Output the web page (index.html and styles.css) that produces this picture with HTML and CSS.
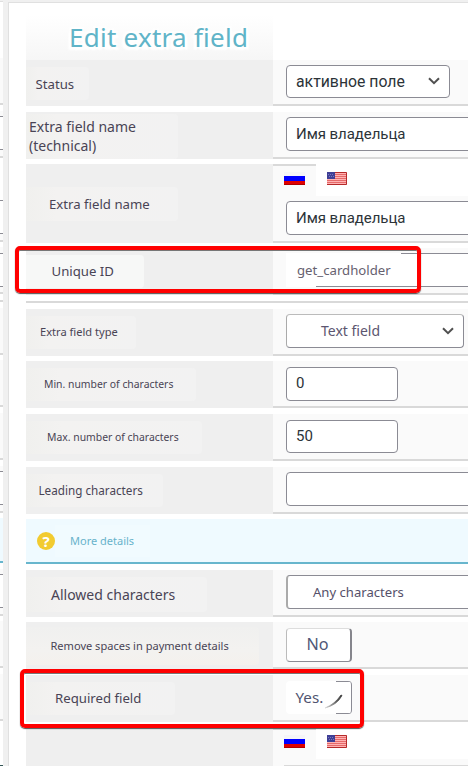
FILE: index.html
```html
<!DOCTYPE html>
<html lang="en">
<head>
<meta charset="utf-8">
<title>Edit extra field</title>
<link rel="stylesheet" href="styles.css">
</head>
<body>
<svg width="0" height="0" class="defs" aria-hidden="true">
  <defs>
    <linearGradient id="pen"><stop offset="0" stop-color="#ddd"/><stop offset=".6" stop-color="#666"/><stop offset="1" stop-color="#333"/></linearGradient>
    <symbol id="ru" viewBox="0 0 21 13"><path fill="#f5f5f7" d="M0 0h21v4H0z"/><path fill="#00f" d="M0 4h21v5H0z"/><path fill="#e00000" d="M0 9h21v4H0z"/><path fill="#b00000" d="M0 12h21v1H0z"/></symbol>
    <symbol id="us" viewBox="0 0 20 13"><path fill="#ffb3b3" d="M0 0h20v13H0z"/><path stroke="#e56a6a" d="M0 2.5h20M0 4.5h20M0 6.5h20M0 8.5h20M0 10.5h20"/><path fill="none" stroke="#b52a2a" d="M0 .5h19.5v12H0"/><path fill="#3f3f96" d="M0 0h8v7H0z"/><path stroke="#7777bd" stroke-dasharray="1 1" d="M1 2.5h6M2 4.5h5"/></symbol>
    <symbol id="chev" viewBox="0 0 12 8"><path d="M1 1.2l5 5 5-5" fill="none" stroke="#505050" stroke-width="2"/></symbol>
  </defs>
</svg>
<div class="page">
  <div class="strip"></div>
  <main class="panel">
    <header class="head"><h1>Edit extra field</h1></header>
    <section class="row status"><div class="label"><span>Status</span></div><div class="value"><div class="input select w164">активное поле<svg class="chev"><use href="#chev"/></svg></div></div></section>
    <section class="row tech"><div class="label"><span>Extra field name<br>(technical)</span></div><div class="value"><div class="input wide">Имя владельца</div></div></section>
    <section class="row names"><div class="label"><span>Extra field name</span></div><div class="value"><div class="tabs"><div class="tab"><svg class="ru"><use href="#ru"/></svg></div><div class="tabs-rest"><svg class="us"><use href="#us"/></svg></div></div><div class="input wide">Имя владельца</div></div></section>
    <section class="row unique"><div class="label"><span>Unique ID</span></div><div class="value"><div class="input wide"><b>get_cardholder</b></div></div><div class="mark mark-id"></div></section>
    <div class="rule"></div>
    <section class="row type"><div class="label"><span>Extra field type</span></div><div class="value"><div class="input select w178">Text field<svg class="chev"><use href="#chev"/></svg></div></div></section>
    <section class="row min"><div class="label"><span>Min. number of characters</span></div><div class="value"><div class="input w112">0</div></div></section>
    <section class="row max"><div class="label"><span>Max. number of characters</span></div><div class="value"><div class="input w112">50</div></div></section>
    <section class="row leading"><div class="label"><span>Leading characters</span></div><div class="value"><div class="input wide"></div></div></section>
    <section class="more"><i>?</i><span>More details</span></section>
    <section class="row allowed"><div class="label"><span>Allowed characters</span></div><div class="value"><div class="input wide">Any characters</div></div></section>
    <section class="row remove"><div class="label"><span>Remove spaces in payment details</span></div><div class="value"><div class="input w66">No</div></div></section>
    <section class="row required"><div class="label"><span>Required field</span></div><div class="value"><div class="input w66"><b>Yes.</b><svg class="pen" viewBox="0 0 18 15"><path d="M0 14Q10 10 16 1l1 .5Q12 11 0 14z" fill="url(#pen)" stroke="url(#pen)" stroke-width=".8"/></svg></div></div><div class="mark mark-req"></div></section>
    <section class="row last"><div class="label"></div><div class="value"><div class="tabs"><div class="tab"><svg class="ru"><use href="#ru"/></svg></div><div class="tabs-rest"><svg class="us"><use href="#us"/></svg></div></div><div class="edge"></div></div></section>
  </main>
</div>
</body>
</html>
```
FILE: styles.css
```css
* { box-sizing: border-box; }
body { margin: 0; overflow: hidden; background: #f0f0f0; font-family: "Noto Sans", sans-serif; color: #494455; }
svg { display: block; }
.defs { position: absolute; }
.page { display: flex; width: 468px; height: 766px; overflow: hidden; }
.strip {
  width: 3px; margin-right: 5px; flex: none;
  background: linear-gradient(#f0f0f0 1px, #dfdfdf 1px 2px, #fff 2px 58px, #fafafa 58px 103px, #d9d9d9 103px 105px, #fff 105px 111px, #fafafa 111px 116px, #8c8c94 116px 117px, #fff 117px 149px, #8c8c94 149px 150px, #fafafa 150px 156px, #d9d9d9 156px 158px, #fff 158px 163px, #fff 163px 200px, #8c8c94 200px 201px, #fff 201px 233px, #8c8c94 233px 234px, #fafafa 234px 240px, #d9d9d9 240px 242px, #fff 242px 247px, #fafafa 247px 253px, #8c8c94 253px 254px, #fff 254px 286px, #8c8c94 286px 287px, #fafafa 287px 292px, #d9d9d9 292px 294px, #fff 294px 300px, #d9d9d9 300px 302px, #fff 302px 308px, #fafafa 308px 353px, #d9d9d9 353px 355px, #fff 355px 360px, #fafafa 360px 405px, #d9d9d9 405px 407px, #fff 407px 413px, #fafafa 413px 458px, #d9d9d9 458px 460px, #fff 460px 466px, #fafafa 466px 471px, #8c8c94 471px 472px, #fff 472px 504px, #8c8c94 504px 505px, #fafafa 505px 511px, #d9d9d9 511px 513px, #fff 513px 518px, #effaff 518px 561px, #68b6cd 561px 563px, #fff 563px 569px, #fafafa 569px 574px, #8c8c94 574px 575px, #fff 575px 607px, #8c8c94 607px 608px, #fafafa 608px 614px, #d9d9d9 614px 616px, #fff 616px 621px, #fafafa 621px 666px, #d9d9d9 666px 668px, #fff 668px 674px, #fafafa 674px 719px, #d9d9d9 719px 721px, #fff 721px 765px, #355 765px);
}
.panel { width: 460px; height: 764px; margin-top: 2px; flex: none; background: #fff; border: solid #e0e0e0; border-width: 1px 0 0 1px; padding-left: 17px; overflow: hidden; }
.head { height: 57px; width: 247px; padding-left: 43px; background: linear-gradient(#fff 12px, #f6f6f6); }
h1 { margin: 0; padding-top: 16px; font-size: 26px; letter-spacing: .25px; line-height: 36px; font-weight: 400; white-space: nowrap; color: #60b4c8; text-shadow: 0 0 3px #fff, 2px 2px 2px #fff, -2px 2px 2px #fff, 2px -2px 2px #fff, -2px -2px 2px #fff, 3px 3px 2px #fff, -3px 3px 2px #fff; }
.row { position: relative; display: flex; height: 47px; margin-bottom: 6px; }
.label { width: 247px; flex: none; background: #efefef; overflow: hidden; }
.label span { display: block; height: 33px; margin-top: 7px; line-height: 33px; white-space: nowrap; border-radius: 0 4px 4px 0; background: linear-gradient(90deg, #f0f0ee, #f3f2f1 20%, #f2f2f2); }
.value { width: 195px; flex: none; padding: 5px 0 0 13px; background: #fafafa; border-bottom: 2px solid #d9d9d9; }
.input { display: flex; align-items: center; width: 112px; height: 34px; padding: 0 0 1px 9px; border: 1px solid #8b8b94; border-radius: 4px; background: #fff; font: 15px Roboto, sans-serif; color: #2c3338; white-space: nowrap; }
.input b { font-weight: 400; }
.wide { width: 200px; letter-spacing: -.05px; }
.w164 { width: 164px; }
.w178 { width: 178px; }
.w66 { width: 66px; }
.select { justify-content: space-between; padding-right: 9px; }
.chev { width: 12px; height: 8px; }

.status { height: 46px; }
.status .input { height: 33px; font-size: 15.8px; }
.status .label span { width: 63px; padding-left: 9.5px; font-size: 13.2px; line-height: 34px; }
.tech .label span { width: 152px; height: 45px; margin-top: 2px; padding: 3px 0 0 3px; font-size: 14px; line-height: 19px; }
.tech { margin-bottom: 5px; }
.names { height: 79px; margin-bottom: 5px; }
.names .label span { width: 152px; height: 34px; margin-top: 23px; padding-left: 23px; font-size: 13.2px; line-height: 34px; }
.names .value { padding-top: 0; }
.tabs { display: flex; height: 32px; margin: 0 0 5px -13px; }
.tab { width: 43px; padding: 6px 0 0 11px; border-top: 2px solid #d9d9d9; }
.tabs-rest { flex: 1; padding: 8px 0 0 11px; background: #fff; }
.ru { width: 21px; height: 13px; }
.us { width: 20px; height: 13px; }
.unique .label span { width: 118px; padding-left: 25.5px; font-size: 13.2px; line-height: 32px; background: #f7f8f7; }
.unique .input { padding: 0; border-left: 0; }
.unique .input b { height: 34px; width: 115px; padding-left: 11px; margin-top: -1px; background: linear-gradient(#fff, #fff) 0 0 / 30px 34px no-repeat, linear-gradient(#fff, #fff) 0 0 / 115px 32px no-repeat; font: 13.2px/34px "Noto Sans", sans-serif; letter-spacing: 0; color: #66616f; }
.rule { height: 2px; margin-bottom: 6px; background: #d9d9d9; }
.type { margin-bottom: 5px; }
.type .label span { width: 110px; padding-left: 14px; font-size: 11.1px; line-height: 32px; }
.type .input { padding-left: 34px; padding-bottom: 2px; font: 14px "Noto Sans", sans-serif; color: #5c5670; border-top-color: #bbb; border-left-color: #aaa; }
.type .chev { margin-top: 1px; }
.min .label span { width: 170px; padding-left: 18px; font-size: 10.4px; }
.min .input { margin-top: 1px; padding-bottom: 2px; }
.max .label span { width: 176px; padding-left: 21px; font-size: 10.4px; }
.max .input { height: 33px; margin-top: 1px; padding-bottom: 2px; }
.leading { margin-bottom: 5px; }
.leading .label span { width: 137px; padding-left: 12.5px; font-size: 11.7px; line-height: 32px; }
.more { display: flex; align-items: center; width: 442px; height: 45px; margin-bottom: 6px; padding-left: 11px; border-bottom: 2px solid #68b6cd; background: #effaff; }
.more i { width: 18px; height: 18px; border-radius: 50%; background: #f2cb30; color: #fff; font: bold 15px/18px "Noto Sans", sans-serif; text-align: center; }
.more span { width: 95px; height: 32px; padding-left: 15px; background: #f1fbff; font-size: 11px; line-height: 31px; color: #68b3cb; white-space: nowrap; }
.allowed { margin-bottom: 5px; }
.allowed .label span { width: 181px; height: 35px; padding-left: 25px; font-size: 14px; line-height: 35px; }
.allowed .input { padding-left: 25px; font: 13.1px "Noto Sans", sans-serif; letter-spacing: 0; color: #555069; border-left: 2px solid #aaa; }
.remove .label span { width: 233px; height: 38px; margin-top: 5px; padding-left: 24.5px; font-size: 11.05px; line-height: 38px; background: linear-gradient(#f0f0ef, #f3f2f0 60%, #f4f1ed); }
.remove .input { margin-top: 1px; padding: 0 0 2px 19.5px; font: 16.2px "Noto Sans", sans-serif; color: #505776; border-top-color: #ddd; border-left-color: #bbb; border-right: 2px solid #85858c; }
.required .label span { width: 149px; padding-left: 29px; font-size: 13.2px; }
.required .input { height: 33px; margin-top: 1px; padding: 0; border: 0; border-right: 1px solid #8b8b94; background: linear-gradient(#8b8b94, #8b8b94) 50px 0 / 15px 1px no-repeat, linear-gradient(#8b8b94, #8b8b94) 50px 32px / 15px 1px no-repeat, #fff; }
.required .input b { width: 39px; padding: 0 0 2px 9.5px; font: 15.2px "Noto Sans", sans-serif; color: #505470; }
.pen { width: 18px; height: 15px; margin-top: 7px; }
.last { height: 40px; margin-bottom: 0; }
.last .value { padding-top: 0; border: 0; }
.last .tabs { height: 31px; margin-bottom: 6px; }
.last .tab { padding-top: 5px; }
.last .tabs-rest { padding-top: 7px; }
.edge { height: 1px; background: #d9d9d9; margin-left: -2px; }
.mark { position: absolute; z-index: 2; border: 4px solid #f00; border-radius: 5px; box-shadow: 0 1px 1px #555, inset 0 1px 0 #777; }
.mark-id { left: -11px; top: -2px; width: 406px; height: 47px; }
.mark-req { left: -6px; top: -6px; width: 344px; height: 59px; }
```
